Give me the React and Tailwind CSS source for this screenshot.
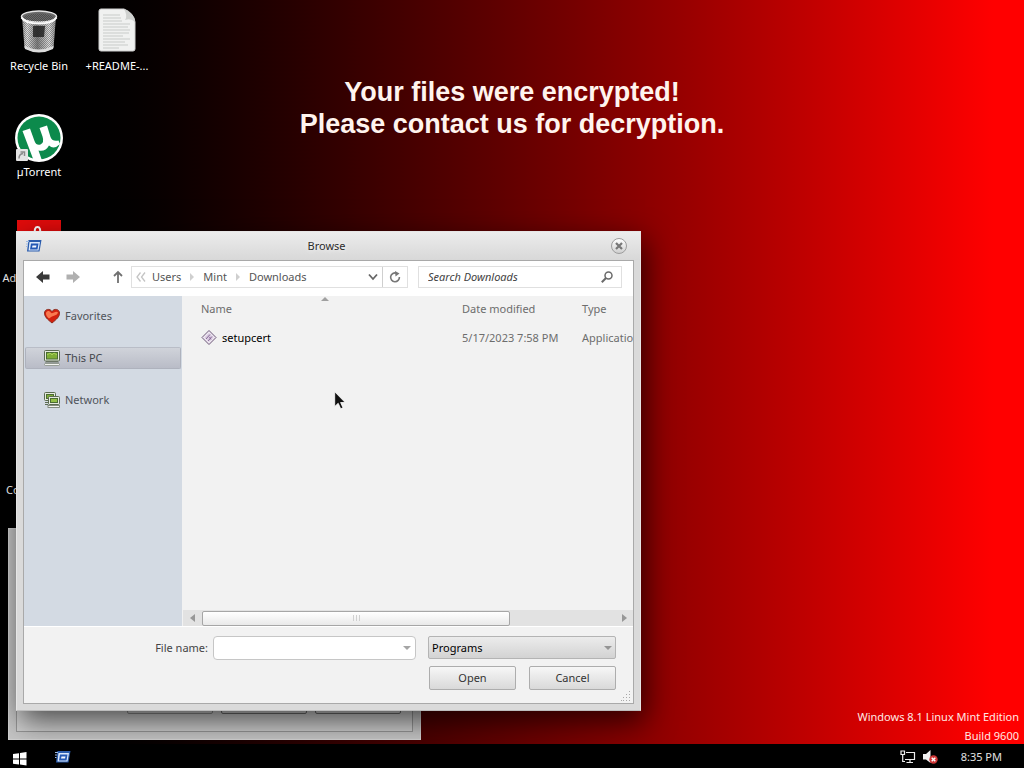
function RecycleBinIcon() {
  return (
    <svg viewBox="0 0 48 48" className="size-12" aria-hidden="true">
      <defs>
        <linearGradient id="binBody" x1="0" x2="1">
          <stop offset="0" stopColor="#9a9a9a" />
          <stop offset=".15" stopColor="#e2e2e2" />
          <stop offset=".45" stopColor="#7f7f7f" />
          <stop offset=".8" stopColor="#dedede" />
          <stop offset="1" stopColor="#8b8b8b" />
        </linearGradient>
        <pattern id="binMesh" width="2" height="2" patternUnits="userSpaceOnUse">
          <rect width="1" height="1" fill="#4c4c4c" />
          <rect x="1" y="1" width="1" height="1" fill="#4c4c4c" />
        </pattern>
      </defs>
      <path d="M7 8L9.500 40Q24 48 38.500 40L41 8Z" fill="url(#binBody)" />
      <path d="M7 8L9.500 38Q24 45 38.500 38L41 8Z" fill="url(#binMesh)" opacity=".5" />
      <path d="M18 18H30L29 29H18Z" fill="#1d1d1d" opacity=".8" />
      <path d="M9.500 38Q24 45 38.500 38L38 41Q24 48 10 41Z" fill="#dcdcdc" />
      <ellipse cx="24" cy="8.500" rx="17.500" ry="5.500" fill="#6a6a6a" stroke="#e6e6e6" strokeWidth="1.500" />
      <ellipse cx="24" cy="9.500" rx="15" ry="4" fill="url(#binMesh)" />
      <path d="M6.500 9.500Q10 15.500 24 15.500T41.500 9.500" fill="none" stroke="#fafafa" strokeWidth="2" />
    </svg>
  );
}

function DocumentIcon() {
  return (
    <svg viewBox="0 0 48 48" className="size-12" aria-hidden="true">
      <path d="M8 1H31Q41 5 42 14V41Q42 43 40 43H8Q6 43 6 41V3Q6 1 8 1Z" fill="#f0f1f0" stroke="#cfcfcf" />
      <path d="M31 1Q35 8 32 12Q38 10 42 14Q41 5 31 1Z" fill="#cfd1cf" />
      <path
        d="M10 7H27M10 10H28M10 13H29M10 16H37M10 19H35M10 22H37M10 25H36M10 28H30M10 31H37M10 34H32M10 37H35M10 40H26"
        stroke="#c8cbc9"
        strokeWidth="1"
      />
    </svg>
  );
}

function TorrentIcon() {
  return (
    <svg viewBox="0 0 48 48" className="size-12" aria-hidden="true">
      <circle cx="24" cy="24" r="24" fill="#fff" />
      <circle cx="24" cy="24" r="21.500" fill="#0c8a4c" />
      <path
        d="M7.500 17L15 14.500L19.500 27Q21.500 32 25.500 30.500Q29.500 28.500 27.500 22.500L24.500 14L32 11.500L35.500 23Q37.500 28 43.500 26.500L45 30Q39 36 34 31.500Q30.500 38 23.500 36.500L27 46.500Q22 47.500 18.500 46Z"
        fill="#fff"
      />
      <rect x="1" y="35" width="12" height="12" rx="1" fill="#e4e4e4" />
      <path d="M4 44.500Q4 40 8 39.500M5.500 38H9.500V42" fill="none" stroke="#8a8a8a" strokeWidth="1.500" />
    </svg>
  );
}

function AdobeIcon() {
  return (
    <svg viewBox="0 0 48 48" className="size-12" aria-hidden="true">
      <rect x="2" width="44" height="48" fill="#e30b0b" />
      <path d="M20 14Q19 7 22.500 7T25 14Q23 26 10 38Q20 28 38 30Q26 26 20 14Z" fill="none" stroke="#fff" strokeWidth="2" />
    </svg>
  );
}

function ProgramIcon() {
  return (
    <svg viewBox="0 0 16 14" className="h-3.5 w-4 shrink-0" aria-hidden="true">
      <path d="M2.500 1H15.500L13.500 12.500H1Z" fill="#2a5cad" />
      <path d="M3.500 3H14L12.500 11.500H2.500Z" fill="#dbe8fa" />
      <path d="M5 4.500H12.500L11.500 10.500H4Z" fill="#2459b5" />
      <path d="M6.500 6.500H10.500L10 8.500H6Z" fill="#f4f8ff" />
      <path d="M0 2.500H3M0 5H2M0 7.500H1.500" stroke="#9db9e2" />
    </svg>
  );
}

function HeartIcon() {
  return (
    <svg viewBox="0 0 16 16" className="size-4" aria-hidden="true">
      <path d="M8 15C3 11 .5 8.500 .5 5.200C.5 .8 6 .2 8 3.500C10 .2 15.500 .8 15.500 5.200C15.500 8.500 13 11 8 15Z" fill="#d3200e" stroke="#8b2a1c" />
      <path d="M2 5.500C2 2.500 5.500 2 7 5C9 6 12 2 14 4.500C13 8 9 7 5 10.500C3 9 2 7 2 5.500Z" fill="#ff8a5c" opacity=".85" />
    </svg>
  );
}

function ComputerIcon() {
  return (
    <svg viewBox="0 0 16 16" className="size-4" aria-hidden="true">
      <rect x=".5" y=".5" width="15" height="10.500" rx="1" fill="#e6eadf" stroke="#5b6b51" />
      <rect x="2.500" y="2.500" width="11" height="6.500" fill="#7fae36" stroke="#4b6c34" />
      <path d="M3 5L6 3L8 5L10 3L13 5" stroke="#a8d05a" fill="none" />
      <path d="M1 13H15M2 11.500H14" stroke="#6b7565" />
      <rect x=".5" y="13.500" width="15" height="2" rx="1" fill="#f3f4f0" stroke="#7d857a" strokeWidth=".7" />
    </svg>
  );
}

function NetworkIcon() {
  return (
    <svg viewBox="0 0 16 16" className="size-4" aria-hidden="true">
      <rect x=".5" y=".5" width="11" height="8" rx="1" fill="#e6eadf" stroke="#5b6b51" />
      <rect x="2.500" y="2.500" width="7" height="4" fill="#7fae36" stroke="#4b6c34" />
      <path d="M1 10.500H4M1 12.500H4" stroke="#5b6b51" />
      <rect x="4.500" y="4.500" width="11" height="8" rx="1" fill="#e6eadf" stroke="#5b6b51" />
      <rect x="6.500" y="6.500" width="7" height="4" fill="#93c046" stroke="#4b6c34" />
      <rect x="4" y="13.500" width="11.500" height="2" fill="#f3f4f0" stroke="#6b7565" strokeWidth=".8" />
    </svg>
  );
}

function SetupIcon() {
  return (
    <svg viewBox="0 0 16 16" className="size-4" aria-hidden="true">
      <path d="M8 .5L15 7.500L8 14.500L1 7.500Z" fill="#efe8f2" stroke="#6b5676" />
      <path d="M8 3L12.500 7.500L8 12L3.500 7.500Z" fill="#d9cbe0" />
      <path d="M5 9L9 4.500M7 11L11 6.500M8.500 7L10 9.500" stroke="#8b6c9b" />
    </svg>
  );
}

function Triangle({ d, className }) {
  return (
    <svg viewBox="0 0 8 8" className={className} aria-hidden="true">
      <path d={d} fill="currentColor" />
    </svg>
  );
}

function DesktopItem({ icon, label }) {
  return (
    <a href="#" className="flex h-[106px] flex-col items-center gap-0.5 pt-2 whitespace-nowrap text-white">
      {icon}
      <span className="leading-4">{label}</span>
    </a>
  );
}

function Separator() {
  return <Triangle d="M2 0L6 4L2 8Z" className="size-2 text-[#cfcfcf]" />;
}

function Place({ icon, label, active }) {
  return (
    <li>
      <button
        className={
          active
            ? "flex h-[22px] w-full items-center gap-[5px] rounded-xs border border-[#aeb2bd] border-t-[#b9bdc7] bg-linear-to-b from-[#d0d3da] to-[#b9bcc7] pl-[18px] text-[#44474d]"
            : "flex h-[22px] w-full items-center gap-[5px] border border-transparent pl-[18px] text-[#50545a]"
        }
      >
        {icon}
        {label}
      </button>
    </li>
  );
}

function BackgroundWindow() {
  return (
    <div className="absolute top-[528px] left-2 flex h-[212px] w-[413px] flex-col border border-[#d2d2d2] bg-[#c6c6c6] px-[7px] pt-7 pb-[7px]">
      <div className="flex flex-1 items-end justify-end gap-2 border border-[#979797] bg-[#d0d0d0] px-[11px] pb-[17px]">
        <span className="h-6 w-[86px] rounded-xs border border-[#8e8e8e]" />
        <span className="h-6 w-[86px] rounded-xs border border-[#6e6e6e]" />
        <span className="h-6 w-[86px] rounded-xs border border-[#6e6e6e]" />
      </div>
    </div>
  );
}

function Toolbar() {
  return (
    <div className="flex h-[35px] items-center bg-white pr-[11px] pb-[3px] pl-3 text-[#555]">
      <button aria-label="Back" className="text-[#3a3a3a]">
        <svg viewBox="0 0 14 12" className="h-3 w-3.5">
          <path d="M0 6L7 0V3.500H13.500V8.500H7V12Z" fill="currentColor" />
        </svg>
      </button>
      <button aria-label="Forward" className="ml-4 text-[#b0b0b0]">
        <svg viewBox="0 0 14 12" className="h-3 w-3.5">
          <path d="M14 6L7 0V3.500H.5V8.500H7V12Z" fill="currentColor" />
        </svg>
      </button>
      <button aria-label="Up" className="ml-8 text-[#707070]">
        <svg viewBox="0 0 12 14" className="h-3.5 w-3">
          <path d="M6 13V2M2 6L6 2L10 6" fill="none" stroke="currentColor" strokeWidth="1.800" />
        </svg>
      </button>
      <nav aria-label="Address" className="ml-[7px] flex h-[22px] flex-1 items-center border border-[#e0e0e0] bg-white pl-1">
        <svg viewBox="0 0 10 10" className="size-2.5" aria-hidden="true">
          <path d="M4.500 .5L1 5L4.500 9.500M9 .5L5.500 5L9 9.500" fill="none" stroke="#c4c4c4" strokeWidth="1.300" />
        </svg>
        <a href="#" className="mr-[7px] ml-1.5">Users</a>
        <Separator />
        <a href="#" className="mx-[7px]">Mint</a>
        <Separator />
        <a href="#" className="ml-[7px]">Downloads</a>
        <button aria-label="Previous locations" className="mr-1 ml-auto">
          <svg viewBox="0 0 10 8" className="h-2 w-2.5">
            <path d="M1 1.500L5 6L9 1.500" fill="none" stroke="#666" strokeWidth="1.800" />
          </svg>
        </button>
        <button aria-label="Refresh" className="flex h-full w-[25px] items-center justify-center border-l border-[#cfcfcf]">
          <svg viewBox="0 0 12 12" className="size-3">
            <path d="M7.500 2.200A4.400 4.400 0 1 0 10.400 6" fill="none" stroke="#777" strokeWidth="1.600" />
            <path d="M6 0L10.500 2.500L6.500 5.500Z" fill="#777" />
          </svg>
        </button>
      </nav>
      <div className="ml-2.5 flex h-[22px] w-[204px] items-center border border-[#e0e0e0] bg-white pr-2 pl-[9px]">
        <input
          aria-label="Search Downloads"
          placeholder="Search Downloads"
          className="min-w-0 flex-1 bg-transparent italic outline-none placeholder:text-[#3f3f3f]"
        />
        <svg viewBox="0 0 12 12" className="size-3" aria-hidden="true">
          <circle cx="7.500" cy="4.500" r="3.500" fill="none" stroke="#6a6a6a" strokeWidth="1.500" />
          <path d="M5 7L.8 11.200" stroke="#6a6a6a" strokeWidth="2" />
        </svg>
      </div>
    </div>
  );
}

function FileList() {
  return (
    <div className="flex min-w-0 flex-1 flex-col bg-[#f2f2f2]">
      <div className="flex-1 overflow-hidden">
        <table className="w-[520px] table-fixed text-left text-[#6d6d6d]">
          <thead>
            <tr className="h-[26px]">
              <th className="relative w-[280px] pl-[19px] font-normal">
                Name
                <Triangle d="M0 6L4 2L8 6Z" className="absolute -top-px left-[139px] size-2 text-[#a0a0a0]" />
              </th>
              <th className="w-[120px] font-normal">Date modified</th>
              <th className="font-normal">Type</th>
            </tr>
          </thead>
          <tbody>
            <tr className="h-8">
              <td className="pl-[19px]">
                <span className="flex items-center gap-[5px] text-black">
                  <SetupIcon />
                  setupcert
                </span>
              </td>
              <td>5/17/2023 7:58 PM</td>
              <td>Application</td>
            </tr>
          </tbody>
        </table>
      </div>
      <div className="ml-px flex h-4 items-center bg-[#e2e2e2]">
        <button aria-label="Scroll left" className="flex w-[19px] justify-center text-[#979797]">
          <Triangle d="M6 0L1 4L6 8Z" className="size-2" />
        </button>
        <div className="flex h-[15px] w-[308px] items-center justify-center gap-0.5 rounded-xs border border-[#a6a6a6] bg-linear-to-b from-white to-[#e9e9e9]">
          <span className="h-1.5 w-px bg-[#d0d0d0]" />
          <span className="h-1.5 w-px bg-[#d0d0d0]" />
          <span className="h-1.5 w-px bg-[#d0d0d0]" />
        </div>
        <button aria-label="Scroll right" className="mr-[5px] ml-auto text-[#979797]">
          <Triangle d="M2 0L7 4L2 8Z" className="size-2" />
        </button>
      </div>
    </div>
  );
}

function BrowseDialog() {
  const button =
    "h-6 w-[87px] rounded-xs border border-[#adadad] bg-linear-to-b from-[#f7f7f7] to-[#d9d9d9] text-[#333]";
  return (
    <section
      role="dialog"
      aria-labelledby="dialog-title"
      className="absolute top-[231px] left-4 flex h-[480px] w-[625px] flex-col border border-[#e6e6e6] border-b-[#bdbdbd] bg-[#dadada] px-1.5 pb-1.5 shadow-[4px_10px_28px_rgba(0,0,0,0.65)]"
    >
      <header className="-mx-1.5 flex h-7 items-center bg-linear-to-b from-[#ececec] to-[#d8d8d8] px-[9px]">
        <ProgramIcon />
        <h2 id="dialog-title" className="flex-1 text-center text-[#2c2c2c] [text-shadow:0_0_5px_#fff]">
          Browse
        </h2>
        <button
          aria-label="Close"
          className="mr-1 flex size-4 items-center justify-center rounded-full border border-[#9d9d9d] bg-linear-to-b from-white to-[#cfcfcf]"
        >
          <svg viewBox="0 0 8 8" className="size-2">
            <path d="M1 1L7 7M7 1L1 7" stroke="#777" strokeWidth="2.200" />
          </svg>
        </button>
      </header>
      <div className="flex flex-1 flex-col border border-[#a9a9a9] bg-[#f2f2f2]">
        <Toolbar />
        <div className="flex h-[330px]">
          <ul className="flex w-[158px] flex-col gap-5 bg-[#d3dae3] px-px pt-[9px]">
            <Place icon={<HeartIcon />} label="Favorites" />
            <Place icon={<ComputerIcon />} label="This PC" active />
            <Place icon={<NetworkIcon />} label="Network" />
          </ul>
          <FileList />
        </div>
        <form className="relative grid flex-1 grid-cols-[184px_203px_1fr] content-start gap-y-1.5 border-t border-white pt-[9px] pr-[17px]">
          <label htmlFor="file-name" className="self-center text-right text-[#444]">
            File name:
          </label>
          <div className="ml-[5px] flex h-6 w-[203px] items-center rounded-sm border border-[#c6c6c6] bg-white pr-1 pl-1">
            <input id="file-name" className="min-w-0 flex-1 outline-none" />
            <button type="button" aria-label="Recent names" className="text-[#a5a5a5]">
              <Triangle d="M0 2H8L4 6Z" className="size-2" />
            </button>
          </div>
          <div className="relative ml-[17px] h-[23px]">
            <select
              aria-label="File type"
              className="size-full appearance-none rounded-xs border border-[#b4b4b4] bg-linear-to-b from-[#ececec] to-[#d3d3d3] pl-[3px] text-black"
            >
              <option>Programs</option>
            </select>
            <Triangle d="M0 2H8L4 6Z" className="pointer-events-none absolute top-2 right-1 size-2 text-[#959595]" />
          </div>
          <div className="col-span-3 flex justify-end gap-[13px]">
            <button type="button" className={button}>
              Open
            </button>
            <button type="button" className={button}>
              Cancel
            </button>
          </div>
          <svg viewBox="0 0 10 10" className="absolute right-0.5 bottom-0.5 size-2.5" aria-hidden="true">
            <path d="M8 0h1v1h-1zM5 3h1v1h-1zM8 3h1v1h-1zM2 6h1v1h-1zM5 6h1v1h-1zM8 6h1v1h-1zM0 9h1v1h-1zM2 9h1v1h-1zM5 9h1v1h-1zM8 9h1v1h-1z" fill="#a8a8a8" />
          </svg>
        </form>
      </div>
    </section>
  );
}

function Taskbar() {
  return (
    <footer className="relative flex h-6 items-center bg-black pt-px pr-[22px] pl-[13px] text-[#e2e2e2]">
      <button aria-label="Start">
        <svg viewBox="0 0 14 14" className="mt-1 size-3.5">
          <path d="M0 2L6 1.200V6.500H0ZM7 1L13.500 0V6.500H7ZM0 7.500H6V12.500L0 11.700ZM7 7.500H13.500V13.500L7 12.600Z" fill="#fff" />
        </svg>
      </button>
      <button aria-label="Browse" className="ml-7">
        <ProgramIcon />
      </button>
      <div className="ml-auto flex items-center">
        <svg viewBox="0 0 16 14" className="h-3.5 w-4" role="img" aria-label="Network">
          <path d="M6 2.500H14.500V9.500H5M10 10V12M6.500 12.500H13" fill="none" stroke="#eee" strokeWidth="1.200" />
          <path d="M1 1H4.500V4.500H1ZM2.700 5V12M2.700 11.500H5" fill="none" stroke="#eee" strokeWidth="1.200" />
        </svg>
        <svg viewBox="0 0 16 14" className="ml-[7px] h-3.5 w-4" role="img" aria-label="Muted">
          <path d="M0 4H3L7.500 0V13L3 9.500H0Z" fill="#f2f2f2" />
          <circle cx="10.500" cy="9.500" r="4.200" fill="#d03636" />
          <path d="M8.700 7.700L12.300 11.300M12.300 7.700L8.700 11.300" stroke="#fff" strokeWidth="1.400" />
        </svg>
        <time className="ml-[22px]">8:35 PM</time>
      </div>
    </footer>
  );
}

export default function App() {
  return (
    <div className="flex min-h-screen flex-col overflow-hidden font-['Noto_Sans','Open_Sans',sans-serif] text-[11px] leading-4">
      <main className="relative flex-1 bg-linear-to-r from-black from-3% to-[#ff0000] to-97%">
        <h1 className="absolute inset-x-0 top-[76px] text-center font-['Liberation_Sans',sans-serif] text-[27px] leading-8 font-bold text-[#fff4ee]">
          Your files were encrypted!
          <br />
          Please contact us for decryption.
        </h1>
        <div className="absolute top-0 left-0 grid grid-cols-[78px_78px]">
          <DesktopItem icon={<RecycleBinIcon />} label="Recycle Bin" />
          <DesktopItem icon={<DocumentIcon />} label="+README-..." />
          <DesktopItem icon={<TorrentIcon />} label="µTorrent" />
          <span />
          <DesktopItem icon={<AdobeIcon />} label="Adobe Reader" />
          <span className="row-start-5 pt-[58px] pl-1.5 text-white">Co</span>
          <span className="row-start-4 h-[106px]" />
        </div>
        <BackgroundWindow />
        <BrowseDialog />
        <p className="absolute right-[5px] -bottom-px text-right leading-[19px] text-[#ffe9e4]">
          Windows 8.1 Linux Mint Edition
          <br />
          Build 9600
        </p>
        <svg viewBox="0 0 12 19" className="pointer-events-none absolute top-[391px] left-[334px] h-[19px] w-3" aria-hidden="true">
          <path d="M.7 .8V15.500L4.200 12.300L6.700 17.800L9 16.800L6.600 11.500H11.200Z" fill="#111" stroke="#fff" strokeWidth=".8" />
        </svg>
      </main>
      <Taskbar />
    </div>
  );
}
